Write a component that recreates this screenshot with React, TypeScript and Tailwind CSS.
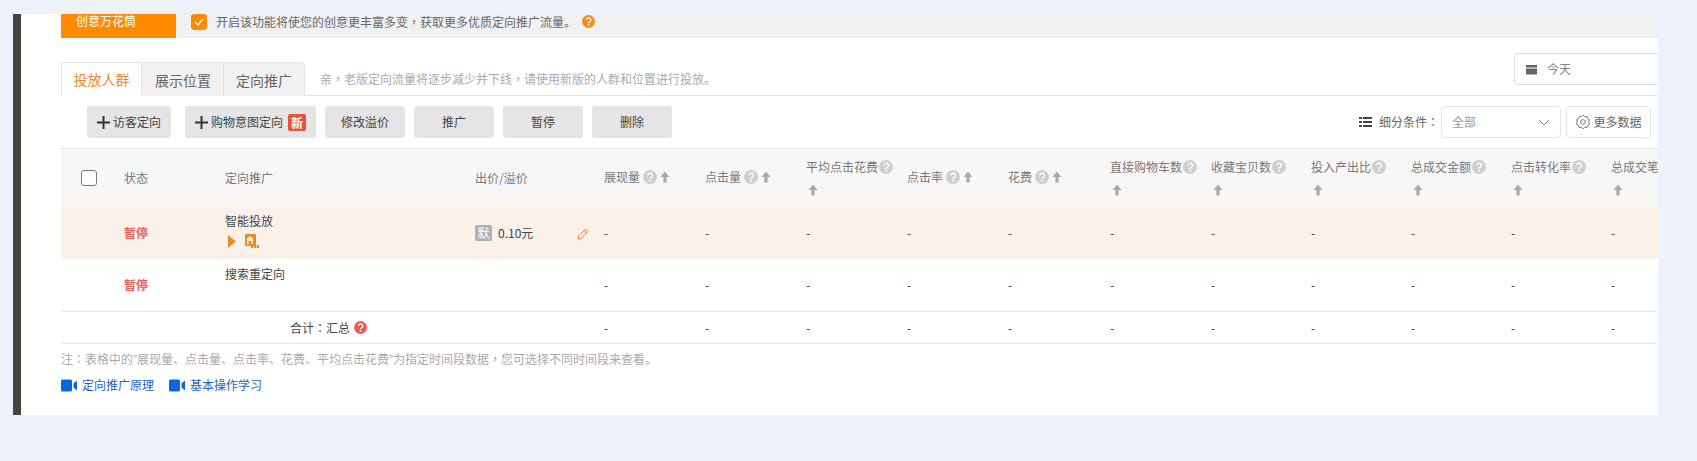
const font = { fontFamily: '"Noto Sans CJK SC", "Liberation Sans", sans-serif' };

const cols = "grid grid-cols-[63px_101px_250px_129px_101px_101px_101px_101px_102px_101px_100px_100px_100px_100px_100px]";

function P({ children }: { children: string }) {
  return <span className="font-['Noto_Sans_CJK_TC']">{children}</span>;
}

function Q() {
  return <span className="font-['Liberation_Sans']">”</span>;
}

function Help({ color = "#cfcfcf", size = 14 }: { color?: string; size?: number }) {
  return (
    <svg width={size} height={size} viewBox="0 0 14 14" className="shrink-0 inline-block">
      <circle cx="7" cy="7" r="7" fill={color} />
      <path d="M4.8 5.4 A2.300 2.300 0 1 1 8.300 7.300 C7.400 7.800 7 8.200 7 9" fill="none" stroke="#fff" strokeWidth="1.4" />
      <rect x="6.200" y="9.900" width="1.600" height="1.600" fill="#fff" />
    </svg>
  );
}

function Up() {
  return (
    <svg width="10" height="12" viewBox="0 0 10 12" className="shrink-0 inline-block">
      <path d="M5 0.500 L9.500 6 H6.600 V11.500 H3.400 V6 H0.500 Z" fill="#a9a9a9" />
    </svg>
  );
}

function Plus() {
  return (
    <svg width="13" height="13" viewBox="0 0 13 13" className="shrink-0">
      <path d="M5.500 0h2v5.500H13v2H7.500V13h-2V7.500H0v-2h5.500z" fill="#333" />
    </svg>
  );
}

function Video() {
  return (
    <svg width="17" height="13" viewBox="0 0 17 13" className="shrink-0">
      <rect x="0" y="0.500" width="11" height="12" rx="1.500" fill="#0a66dc" />
      <path d="M16 1.500 V11.500 L12.500 8.500 V4.500 Z" fill="#0a66dc" />
    </svg>
  );
}

function Head({ label, wrap }: { label: string; wrap?: boolean }) {
  if (wrap) {
    return (
      <div className="flex flex-col gap-[9px] text-[12px] leading-[16px] text-[#777]">
        <div className="flex items-center gap-[1px] whitespace-nowrap">
          <span>{label}</span>
          <Help />
        </div>
        <div className="pl-[2px] h-[12px] flex items-center"><Up /></div>
      </div>
    );
  }
  return (
    <div className="flex items-center gap-[3px] text-[12px] text-[#777] whitespace-nowrap -mt-[1px]">
      <span>{label}</span>
      <Help />
      <Up />
    </div>
  );
}

const metrics: [string, boolean][] = [
  ["展现量", false],
  ["点击量", false],
  ["平均点击花费", true],
  ["点击率", false],
  ["花费", false],
  ["直接购物车数", true],
  ["收藏宝贝数", true],
  ["投入产出比", true],
  ["总成交金额", true],
  ["点击转化率", true],
  ["总成交笔", true],
];

function Dashes() {
  return (
    <>
      {metrics.map(([m]) => (
        <div key={m} className="text-[12px] text-[#333]">-</div>
      ))}
    </>
  );
}

function Btn({ w, children }: { w: string; children: React.ReactNode }) {
  return (
    <button className={`${w} h-[32px] shrink-0 flex items-center justify-center rounded-[3px] bg-[#e5e5e5] text-[12px] text-[#444]`}>
      {children}
    </button>
  );
}

export default function App() {
  return (
    <div style={font} className="h-[461px] w-[1697px] overflow-hidden bg-[#eef3fb] pt-[14px] pl-[13px]">
      <div className="w-[1645px] h-[401px] overflow-hidden bg-white border-l-[8px] border-[#45443d] pl-[40px]">
        <div className="w-[1597px]">
          {/* Banner */}
          <div className="flex h-[24px] bg-[#f1f1f1]">
            <div className="w-[115px] bg-[#ff8a00] pl-[15px] text-[12px] leading-[14px] text-white">创意万花筒</div>
            <div className="ml-[15px] flex items-start">
              <div className="w-[16px] h-[16px] rounded-[3px] bg-[#ff8a00] flex items-center justify-center">
                <svg width="10" height="8" viewBox="0 0 10 8">
                  <path d="M1 4 L4 7 L9 1" fill="none" stroke="#fff" strokeWidth="1.2" />
                </svg>
              </div>
              <span className="ml-[9px] text-[12px] leading-[16px] text-[#666]">开启该功能将使您的创意更丰富多变<P>，</P>获取更多优质定向推广流量。</span>
              <span className="ml-[6px] mt-[1px] flex"><Help color="#f39019" size={13} /></span>
            </div>
          </div>

          {/* Tabs */}
          <div className="mt-[15px] h-[43px] flex items-end border-b border-[#e4e4e4]">
            <div className="flex h-[34px] -mb-[1px]">
              <div className="w-[81px] border border-[#e4e4e4] border-b-white rounded-tl-[4px] bg-white text-[14px] leading-[33px] text-center text-[#f0882c]">投放人群</div>
              <div className="w-[81px] pl-[1px] border-t border-[#e8e8e8] bg-[#f1f1f1] text-[14px] leading-[34px] text-center text-[#666]">展示位置</div>
              <div className="w-[82px] border-t border-r border-l border-[#e4e4e4] rounded-tr-[4px] bg-[#f1f1f1] text-[14px] leading-[34px] text-center text-[#666]">定向推广</div>
            </div>
            <div className="ml-[15px] h-[33px] text-[12px] leading-[33px] text-[#aaa]">亲<P>，</P>老版定向流量将逐步减少并下线<P>，</P>请使用新版的人群和位置进行投放。</div>
            <div className="ml-auto -mr-[40px] self-start w-[184px] h-[32px] flex items-center rounded-[4px] border border-[#ddd] pl-[11px] text-[12px] text-[#888] shrink-0">
              <svg width="11" height="11" viewBox="0 0 11 11" className="shrink-0">
                <path d="M0 1h11v2.500H0zM0 4.500h11V10.500H0z" fill="#666" />
              </svg>
              <span className="ml-[10px]">今天</span>
            </div>
          </div>

          {/* Toolbar */}
          <div className="h-[53px] flex items-center border-b border-[#e4e4e4] pl-[26px]">
            <Btn w="w-[84px]"><Plus /><span className="ml-[3px]">访客定向</span></Btn>
            <Btn w="w-[131px] ml-[14px]">
              <Plus />
              <span className="ml-[3px]">购物意图定向</span>
              <span className="ml-[5px] w-[18px] h-[17px] rounded-[2px] bg-[#e8533a] text-[12px] leading-[17px] font-bold text-white">新</span>
            </Btn>
            <Btn w="w-[80px] ml-[9px]">修改溢价</Btn>
            <Btn w="w-[80px] ml-[9px]">推广</Btn>
            <Btn w="w-[80px] ml-[9px]">暂停</Btn>
            <Btn w="w-[80px] ml-[9px]">删除</Btn>
            <div className="ml-auto flex items-center">
              <svg width="13" height="10" viewBox="0 0 13 10" className="shrink-0">
                <path d="M0 0h3v2H0zM4 0h9v2H4zM0 4h3v2H0zM4 4h9v2H4zM0 8h3v2H0zM4 8h9v2H4z" fill="#444" />
              </svg>
              <span className="ml-[7px] text-[12px] text-[#666]">细分条件<P>：</P></span>
              <div className="ml-[2px] w-[120px] h-[32px] flex items-center justify-between rounded-[4px] border border-[#e4e4e4] pl-[10px] pr-[10px] text-[12px] text-[#999]">
                <span>全部</span>
                <svg width="12" height="7" viewBox="0 0 12 7"><path d="M1 1 L6 6 L11 1" fill="none" stroke="#888" strokeWidth="1" /></svg>
              </div>
              <div className="ml-[5px] mr-[7px] w-[85px] h-[32px] flex items-center justify-center rounded-[4px] border border-[#e4e4e4] text-[12px] text-[#666]">
                <svg width="16" height="16" viewBox="0 0 15 15" className="shrink-0">
                  <path d="M7.500 1 L9 2.600 L11.200 2.300 L11.700 4.400 L13.700 5.400 L12.800 7.500 L13.700 9.600 L11.700 10.600 L11.200 12.700 L9 12.400 L7.500 14 L6 12.400 L3.800 12.700 L3.300 10.600 L1.300 9.600 L2.200 7.500 L1.300 5.400 L3.300 4.400 L3.800 2.300 L6 2.600 Z" fill="none" stroke="#777" strokeWidth="0.9" />
                  <circle cx="7.500" cy="7.500" r="2.200" fill="none" stroke="#777" strokeWidth="0.9" />
                </svg>
                <span className="ml-[2px]">更多数据</span>
              </div>
            </div>
          </div>

          {/* Table header */}
          <div className={`${cols} h-[57px] items-center bg-[#f7f7f7]`}>
            <div className="pl-[20px]">
              <div className="w-[16px] h-[16px] rounded-[3px] border border-[#777] bg-white" />
            </div>
            <div className="text-[12px] text-[#777]">状态</div>
            <div className="text-[12px] text-[#777]">定向推广</div>
            <div className="text-[12px] text-[#777]">出价/溢价</div>
            {metrics.map(([m, w]) => (
              <Head key={m} label={m} wrap={w} />
            ))}
          </div>

          {/* Row 1 */}
          <div className={`${cols} h-[53px] items-center bg-[#fbf1eb]`}>
            <div />
            <div className="text-[12px] font-bold text-[#e4605a]">暂停</div>
            <div className="self-start pt-[7px]">
              <div className="text-[12px] leading-[16px] text-[#444]">智能投放</div>
              <div className="mt-[5px] flex items-center">
                <svg width="9" height="13" viewBox="0 0 9 13" className="ml-[3px] shrink-0"><path d="M0 0 L8 6.500 L0 13 Z" fill="#f08a1c" /></svg>
                <svg width="14" height="14" viewBox="0 0 14 14" className="ml-[8px] shrink-0">
                  <rect x="0" y="0" width="11" height="12" rx="1" fill="#f08a1c" />
                  <path d="M2 11 V4.500 L5 2 L8 4.500 V11 H6.500 V7 H3.500 V11 Z" fill="#fbf1eb" />
                  <path d="M6 14V10h2.200v4zM8.800 14V8H11v6zM11.600 14v-3H14v3z" fill="#f08a1c" />
                </svg>
              </div>
            </div>
            <div className="flex items-center relative">
              <span className="w-[17px] h-[16px] rounded-[2px] bg-[#b0b0b0] text-[12px] leading-[16px] text-center text-white">默</span>
              <span className="ml-[6px] text-[12px] text-[#444]">0.10元</span>
              <svg width="12" height="12" viewBox="0 0 12 12" className="absolute left-[102px] top-[4px]">
                <path d="M8.500 1 L11 3.500 L4 10.500 L1 11 L1.500 8 Z M7 2.500 L9.500 5" fill="none" stroke="#ee7f3a" strokeWidth="1" />
              </svg>
            </div>
            <Dashes />
          </div>

          {/* Row 2 */}
          <div className={`${cols} h-[53px] items-center border-b border-[#e8e8e8]`}>
            <div />
            <div className="text-[12px] font-bold text-[#e4605a]">暂停</div>
            <div className="self-start pt-[7px] text-[12px] leading-[16px] text-[#444]">搜索重定向</div>
            <div />
            <Dashes />
          </div>

          {/* Total */}
          <div className={`${cols} h-[32px] items-center border-b border-[#e8e8e8]`}>
            <div />
            <div className="col-span-2 pl-[166px] flex items-center text-[12px] text-[#444]">
              <span>合计<P>：</P>汇总</span>
              <span className="ml-[4px] flex"><Help color="#ee5a55" size={13} /></span>
            </div>
            <div />
            <Dashes />
          </div>

          {/* Notes */}
          <div className="mt-[6px] text-[12px] leading-[18px] text-[#aaa]">注<P>：</P>表格中的<Q />展现量、点击量、点击率、花费、平均点击花费<Q />为指定时间段数据<P>，</P>您可选择不同时间段来查看。</div>
          <div className="mt-[7px] flex items-center text-[12px] leading-[18px] text-[#1f5fc4]">
            <Video />
            <span className="ml-[4px]">定向推广原理</span>
            <span className="ml-[15px] flex"><Video /></span>
            <span className="ml-[4px]">基本操作学习</span>
          </div>
        </div>
      </div>
    </div>
  );
}
